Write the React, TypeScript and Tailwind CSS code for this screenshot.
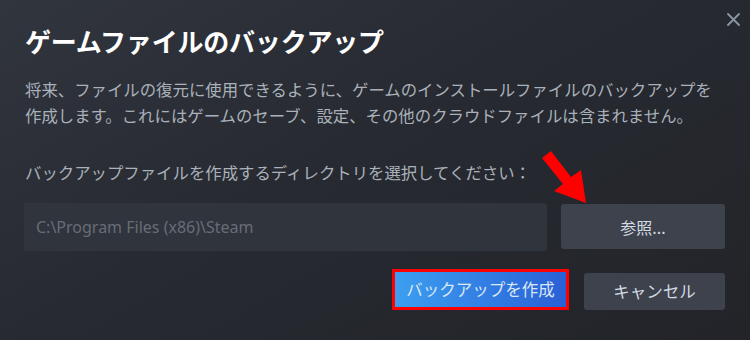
import React from 'react'

const jp = { fontFamily: '"Noto Sans CJK JP", "Noto Sans", sans-serif' }

function CloseIcon() {
  return (
    <svg width="13" height="13" viewBox="0 0 13 13" className="absolute right-[10px] top-[13px]">
      <path d="M1 1 L12 12 M12 1 L1 12" stroke="#8a96a3" strokeWidth="1.8" strokeLinecap="round" />
    </svg>
  )
}

function RedArrow() {
  // annotation arrow pointing at the browse button
  return (
    <svg width="50" height="60" viewBox="0 0 50 60" className="absolute left-[540px] top-[146px]">
      <polygon points="2,12 11,5 31,31 41,24 46,57 14,45 23,38" fill="#ff0000" />
    </svg>
  )
}

export default function App() {
  return (
    <div
      className="relative w-[750px] h-[340px] overflow-hidden bg-[linear-gradient(150deg,#31353e_0%,#272a31_45%,#222429_100%)] px-[25px] pt-[25px]"
      style={jp}
    >
      <CloseIcon />
      <RedArrow />

      <h1 className="text-[26px] leading-[32px] font-bold text-white tracking-[-0.2px]">
        ゲームファイルのバックアップ
      </h1>

      <p className="mt-[19px] text-[16.4px] leading-[26px] text-[#a9b1ba] whitespace-nowrap">
        将来、ファイルの復元に使用できるように、ゲームのインストールファイルのバックアップを
        <br />
        作成します。これにはゲームのセーブ、設定、その他のクラウドファイルは含まれません。
      </p>

      <p className="mt-[31px] text-[16.4px] leading-[26px] text-[#a9b1ba]">
        バックアップファイルを作成するディレクトリを選択してください：
      </p>

      <div className="mt-[18px] flex items-start gap-[14px] -ml-px">
        <div
          className="w-[523px] h-[48px] rounded-[3px] bg-[#30343c] flex items-center pl-[12px] text-[16px] text-[#676d76]"
          style={{ fontFamily: '"Noto Sans", "DejaVu Sans", sans-serif' }}
        >
          C:\Program Files (x86)\Steam
        </div>
        <button className="mt-px w-[164px] h-[45px] rounded-[3px] bg-[#3d424d] text-[16px] text-[#d4dbe2] flex items-center justify-center">
          参照...
        </button>
      </div>

      <div className="mt-[18px] flex justify-end items-end gap-[15px]">
        <div className="w-[177px] h-[41px] border-[3px] border-[#ff0000] bg-[#1d1f24]">
          <button className="w-full h-full bg-[linear-gradient(90deg,#3c9ff0,#2a5fd6)] text-[16.5px] text-[#dbe7f3] flex items-center justify-center">
            バックアップを作成
          </button>
        </div>
        <button className="w-[141px] h-[37px] rounded-[3px] bg-[#3d424d] text-[16.5px] text-[#d4dbe2] flex items-center justify-center">
          キャンセル
        </button>
      </div>
    </div>
  )
}
